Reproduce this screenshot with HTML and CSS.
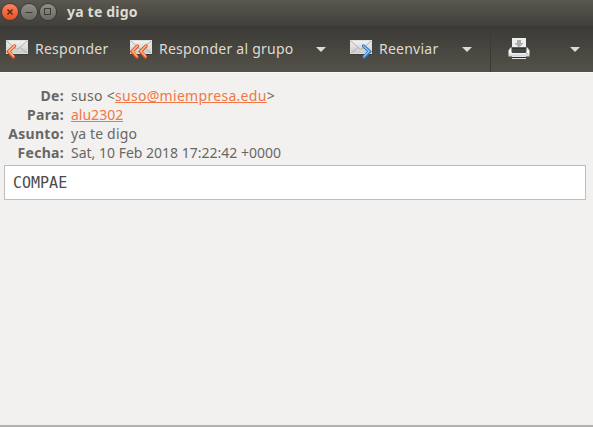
FILE: index.html
```html
<!DOCTYPE html>
<html lang="es">
<head>
<meta charset="utf-8">
<title>ya te digo</title>
<link rel="stylesheet" href="styles.css">
</head>
<body>
<svg class="defs" width="0" height="0" aria-hidden="true">
  <defs>
    <linearGradient id="paper" x1="0" y1="0" x2="0" y2="1"><stop offset="0" stop-color="#f2f2f2"/><stop offset="1" stop-color="#c9c9c9"/></linearGradient>
    <linearGradient id="metal" x1="0" y1="0" x2="0" y2="1"><stop offset="0" stop-color="#dedede"/><stop offset=".5" stop-color="#fff"/><stop offset="1" stop-color="#c8c8c8"/></linearGradient>
    <symbol id="envelope" viewBox="0 0 24 22">
      <path d="M1 15.500h22" stroke="#2f2e2a" stroke-opacity=".5"/>
      <rect x="1.500" y="1.500" width="21" height="13" fill="url(#paper)" stroke="#dededc"/>
      <path d="M2 2l7 6.500 2.500 1.500h1L15 8.500 22 2M2 14l7-5.500M22 14l-7-5.500" fill="none" stroke="#b0b0ae"/>
    </symbol>
  </defs>
</svg>
<header class="titlebar">
  <div class="controls">
    <span class="control close"><svg width="16" height="16"><path d="M5.500 5.500l5 5m0-5l-5 5" stroke="#54230f" stroke-width="1.400"/></svg></span>
    <span class="control"><svg width="16" height="16"><path d="M4.500 8.500h7" stroke="#3c3b37"/></svg></span>
    <span class="control"><svg width="16" height="16"><rect x="4.500" y="4.500" width="6" height="6" fill="none" stroke="#3c3b37"/></svg></span>
  </div>
  <h1 class="title">ya te digo</h1>
</header>
<nav class="toolbar">
  <div class="tool reply">
    <svg class="icon" width="24" height="22"><use href="#envelope"/><path d="M9.500 7L3.500 12.500 8.500 18" fill="none" stroke="#dd5424" stroke-width="3.400" stroke-linecap="round"/><path d="M9.500 6.800L3.800 12.300 8.500 17.300" fill="none" stroke="#ffb484" stroke-width="1.600" stroke-linecap="round"/></svg>
    <span class="label">Responder</span>
  </div>
  <div class="tool group">
    <svg class="icon" width="24" height="22"><use href="#envelope"/><path d="M8.500 7L3 12.500 8 18M17 7L11.500 12.500 16.500 18" fill="none" stroke="#dd5424" stroke-width="3.400" stroke-linecap="round"/><path d="M8.500 6.800L3.300 12.300 8 17.300M17 6.800L11.800 12.300 16.500 17.300" fill="none" stroke="#ffb484" stroke-width="1.600" stroke-linecap="round"/></svg>
    <span class="label">Responder al grupo</span>
    <span class="arrow"></span>
  </div>
  <div class="tool forward">
    <svg class="icon" width="24" height="22"><use href="#envelope"/><path d="M14.500 7L20.500 12.500 15 18" fill="none" stroke="#3379bd" stroke-width="3.400" stroke-linecap="round"/><path d="M14.500 7L20.200 12.300 15 17.500" fill="none" stroke="#8fc3f0" stroke-width="1.400" stroke-linecap="round"/></svg>
    <span class="label">Reenviar</span>
    <span class="arrow"></span>
  </div>
  <div class="tool print">
    <svg class="printer" width="24" height="24">
      <rect x="5" y="1" width="14" height="14" fill="#efefef"/>
      <path d="M10 3h4v3h2.500L12 10.500 7.500 6H10z" fill="#aaa"/>
      <path d="M3.500 10.500h17l2 3v6h-21v-6z" fill="url(#metal)"/>
      <path d="M4.500 10.500h15v4q0 1.500-1.500 1.500H6q-1.500 0-1.500-1.500z" fill="#464646"/>
      <path d="M5 11h14" stroke="#1f1f1f"/>
      <rect x="5" y="19" width="14" height="3" fill="#e4e4e4"/><path d="M5 20.500h14" stroke="#292929"/>
      <rect x="19" y="16" width="2" height="1" fill="#83d96d"/>
    </svg>
    <span class="arrow"></span>
  </div>
</nav>
<main class="message">
  <dl class="headers">
    <dt>De:</dt><dd class="from">suso &lt;<a class="link">suso@miempresa.edu</a>&gt;</dd>
    <dt>Para:</dt><dd class="to"><a class="link">alu2302</a></dd>
    <dt>Asunto:</dt><dd class="subject">ya te digo</dd>
    <dt>Fecha:</dt><dd class="date">Sat, 10 Feb 2018 17:22:42 +0000</dd>
  </dl>
  <pre class="body">COMPAE</pre>
</main>
</body>
</html>
```
FILE: styles.css
```css
* { box-sizing: border-box; }
body {
  margin: 0;
  height: 427px;
  display: flex;
  flex-direction: column;
  overflow: hidden;
  background: #f2f1f0;
  color: #686764;
  font: 14px/19px "Noto Sans", "Open Sans", sans-serif;
}
.defs { position: absolute; }
.titlebar {
  height: 27px;
  display: flex;
  align-items: center;
  padding: 0 0 3px 2px;
  background: linear-gradient(#59574f, #403f3a 26px);
  border-bottom: 1px solid #393834;
}
.controls { display: flex; gap: 3px; }
.control {
  width: 16px;
  height: 16px;
  border-radius: 50%;
  background: linear-gradient(#908e87, #6b6a64);
  box-shadow: 0 0 0 1px #3b3a35;
}
.control.close { background: linear-gradient(#f98562, #e5501e); }
.control svg { display: block; }
.title {
  margin: 0 0 0 11px;
  color: #dfdbd2;
  font-size: 14px;
  line-height: 20px;
  font-weight: 700;
  letter-spacing: .2px;
  white-space: nowrap;
}
.toolbar {
  height: 45px;
  display: flex;
  background: linear-gradient(#3c3b37, #545149);
  color: #dfdbd2;
}
.tool { display: flex; align-items: center; white-space: nowrap; }
.icon { margin-right: 6px; flex: none; }
.printer { margin-bottom: 2px; }
.reply { width: 124px; padding-left: 5px; }
.group { width: 220px; padding-left: 5px; }
.group .label { width: 157px; }
.forward { width: 147px; padding-left: 5px; border-right: 1px solid #3b3a35; }
.forward .label { width: 83px; }
.print { width: 102px; padding-left: 16px; }
.print .arrow { margin-left: 39px; }
.label { font-size: 14px; letter-spacing: .24px; padding-bottom: 3px; }
.arrow {
  border: 5px solid transparent;
  border-top-color: #dfdbd2;
  border-bottom: 0;
}
.message {
  flex: 1;
  padding: 13px 7px 0 4px;
  border-top: 1px solid #fbfaf9;
  border-bottom: 2px solid #b4b2af;
}
.headers {
  display: grid;
  grid-template-columns: 60px 1fr;
  column-gap: 7px;
  grid-auto-rows: 19px;
  margin: 0;
}
dt { text-align: right; font-weight: 700; letter-spacing: .3px; white-space: nowrap; }
dd { margin: 0; white-space: nowrap; }
.from { letter-spacing: .3px; }
.subject { letter-spacing: .15px; }
.link { color: #f07746; text-decoration: underline; }
.body {
  height: 35px;
  margin: 3px 0 0;
  padding: 0 8px;
  border: 1px solid #bfbdbb;
  background: #fff;
  color: #4c4c4c;
  font: 15px/34px "DejaVu Sans Mono", monospace;
}
```
